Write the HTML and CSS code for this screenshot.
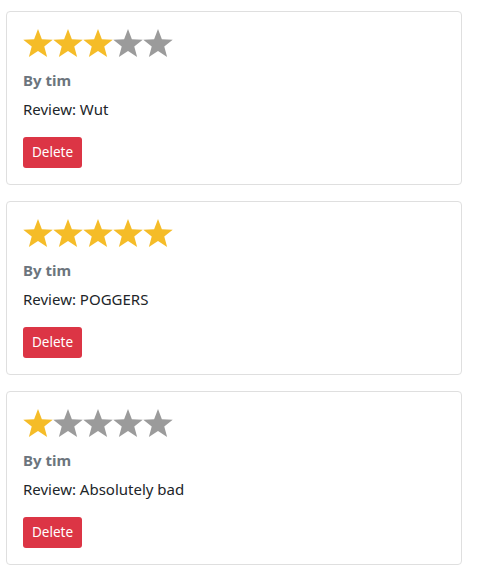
FILE: index.html
```html
<!DOCTYPE html>
<html>
<head>
<meta charset="utf-8">
<link rel="stylesheet" href="styles.css">
</head>
<body>
<svg width="0" height="0" class="defs">
  <defs>
    <polygon id="star" points="15,0 18.88,10.16 29.74,10.71 21.28,17.54 24.11,28.04 15,22.1 5.89,28.04 8.72,17.54 0.26,10.71 11.12,10.16"/>
  </defs>
</svg>
<div class="list">
  <div class="card">
    <div class="stars">
      <svg class="star on" viewBox="0 0 30 29"><use href="#star"/></svg>
      <svg class="star on" viewBox="0 0 30 29"><use href="#star"/></svg>
      <svg class="star on" viewBox="0 0 30 29"><use href="#star"/></svg>
      <svg class="star off" viewBox="0 0 30 29"><use href="#star"/></svg>
      <svg class="star off" viewBox="0 0 30 29"><use href="#star"/></svg>
    </div>
    <div class="author">By tim</div>
    <div class="review">Review: Wut</div>
    <div><button class="btn-delete">Delete</button></div>
  </div>
  <div class="card">
    <div class="stars">
      <svg class="star on" viewBox="0 0 30 29"><use href="#star"/></svg>
      <svg class="star on" viewBox="0 0 30 29"><use href="#star"/></svg>
      <svg class="star on" viewBox="0 0 30 29"><use href="#star"/></svg>
      <svg class="star on" viewBox="0 0 30 29"><use href="#star"/></svg>
      <svg class="star on" viewBox="0 0 30 29"><use href="#star"/></svg>
    </div>
    <div class="author">By tim</div>
    <div class="review">Review: POGGERS</div>
    <div><button class="btn-delete">Delete</button></div>
  </div>
  <div class="card">
    <div class="stars">
      <svg class="star on" viewBox="0 0 30 29"><use href="#star"/></svg>
      <svg class="star off" viewBox="0 0 30 29"><use href="#star"/></svg>
      <svg class="star off" viewBox="0 0 30 29"><use href="#star"/></svg>
      <svg class="star off" viewBox="0 0 30 29"><use href="#star"/></svg>
      <svg class="star off" viewBox="0 0 30 29"><use href="#star"/></svg>
    </div>
    <div class="author">By tim</div>
    <div class="review">Review: Absolutely bad</div>
    <div><button class="btn-delete">Delete</button></div>
  </div>
</div>
</body>
</html>
```
FILE: styles.css
```css
html, body {
  margin: 0;
  padding: 0;
  background: #ffffff;
}
body {
  font-family: "Noto Sans", "Open Sans", sans-serif;
  color: #212529;
}
.defs {
  position: absolute;
  width: 0;
  height: 0;
}
.list {
  display: flex;
  flex-direction: column;
  gap: 16px;
  padding: 11px 0 0 6px;
  width: 456px;
}
.card {
  border: 1px solid #dfdfdf;
  border-radius: 4px;
  padding: 16px;
  display: flex;
  flex-direction: column;
}
.stars {
  display: flex;
  height: 30px;
  align-items: flex-start;
  padding-top: 1px;
  box-sizing: border-box;
}
.star {
  width: 30px;
  height: 29px;
  display: block;
}
.star.on { fill: #f5bc28; }
.star.off { fill: #9b9b9b; }
.author {
  margin-top: 11px;
  font-size: 15px;
  line-height: 22px;
  font-weight: 700;
  color: #6c757d;
}
.review {
  margin-top: 7px;
  font-size: 15px;
  line-height: 22px;
}
.btn-delete {
  margin-top: 17px;
  height: 31px;
  padding: 0 9px;
  border: none;
  border-radius: 3px;
  background: #dc3545;
  color: #ffffff;
  font-family: "Noto Sans", "Open Sans", sans-serif;
  font-size: 13.5px;
  line-height: 31px;
  cursor: pointer;
}
```
